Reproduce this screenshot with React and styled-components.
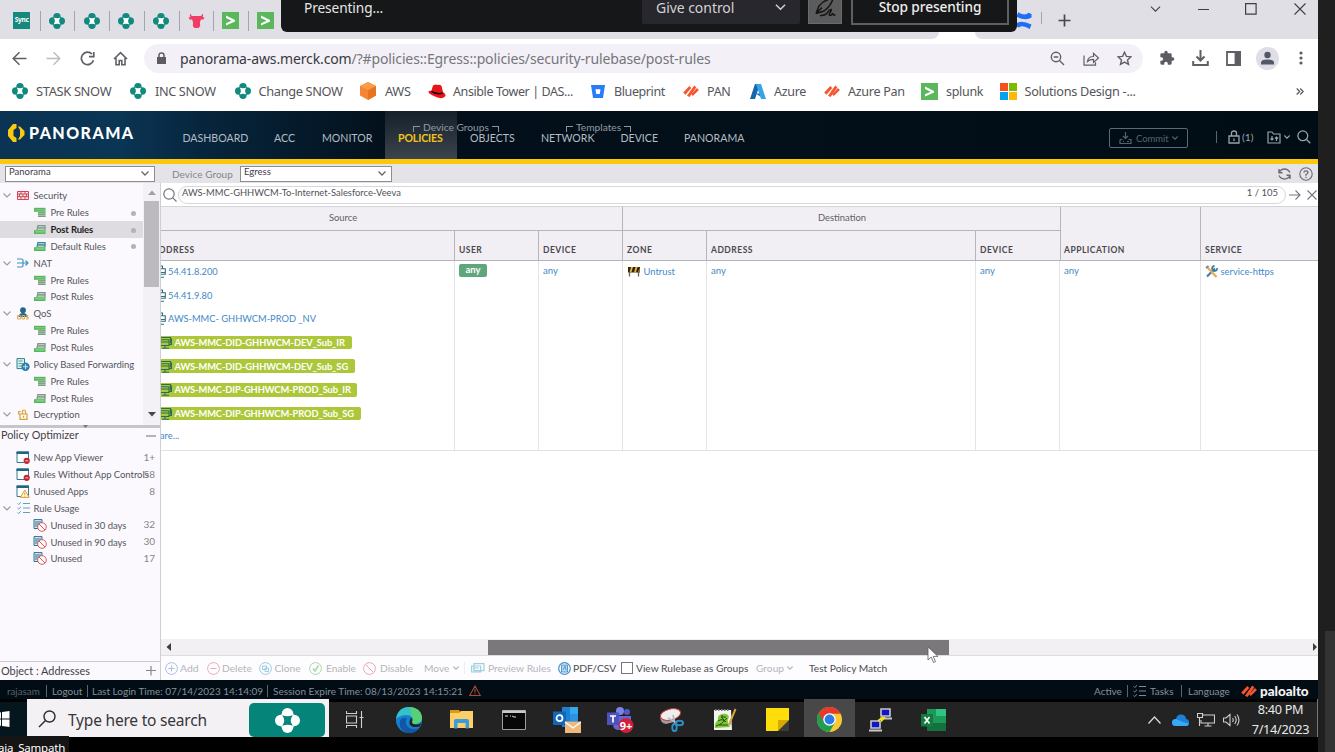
import React from "react";
import styled, { createGlobalStyle } from "styled-components";

const WIN = '"Noto Sans", "Open Sans", sans-serif';
const LATO = 'Lato, "Open Sans", sans-serif';

const GlobalStyle = createGlobalStyle`
  * { box-sizing: border-box; }
  html, body { margin: 0; padding: 0; background: #1f1f1f; }
  body { width: 1335px; height: 752px; overflow: hidden; }
  svg { display: block; flex: none; }
`;

/* ---------- shell ---------- */
const Screen = styled.div`
  display: flex;
  width: 1335px;
  height: 752px;
  overflow: hidden;
  background: #1f1f1f;
  font-family: ${LATO};
`;
const Desktop = styled.div`
  position: relative;
  display: flex;
  flex-direction: column;
  flex: none;
  width: 1318px;
  height: 752px;
  background: #000;
  overflow: hidden;
`;
const Gutter = styled.div`
  flex: 1;
  display: flex;
  align-items: flex-end;
  justify-content: flex-end;
  background: #1f1f1f;
`;
const GutterPanel = styled.div`
  width: 10px;
  height: 121px;
  background: #333;
`;
const Label = styled.span`
  flex: none;
  white-space: pre;
  width: ${(p) => (p.$w ? `${p.$w}px` : "auto")};
  margin-left: ${(p) => p.$ml || 0}px;
  font-size: ${(p) => p.$size || 11}px;
  letter-spacing: ${(p) => p.$ls || 0}px;
  color: ${(p) => p.$c || "inherit"};
  font-weight: ${(p) => p.$b || 400};
`;
const Slot = styled.span`
  flex: none;
  display: flex;
  align-items: center;
  justify-content: center;
  width: ${(p) => p.$w}px;
  margin-left: ${(p) => (p.$push ? "auto" : `${p.$ml || 0}px`)};
  margin-right: ${(p) => p.$mr || 0}px;
`;

/* ---------- browser ---------- */
const TabStrip = styled.div`
  display: flex;
  align-items: flex-start;
  flex: none;
  height: 39px;
  padding: 12px 0 0 4px;
  background: #e0dfe6;
  font-family: ${WIN};
`;
const Tab = styled.div`
  display: flex;
  align-items: center;
  justify-content: center;
  flex: none;
  width: ${(p) => p.$w || 34.8}px;
  height: 17px;
  position: relative;
  &::after {
    content: "";
    position: absolute;
    right: -1px;
    top: -1px;
    width: 1px;
    height: 20px;
    background: ${(p) => (p.$last ? "transparent" : "#a5a4ab")};
  }
`;
const SyncTile = styled.span`
  width: 17px;
  height: 17px;
  line-height: 15px;
  text-align: center;
  background: #15897d;
  color: #fff;
  font-size: 6.5px;
  font-weight: 700;
  letter-spacing: -0.2px;
`;
const ActiveTabFoot = styled.div`
  position: absolute;
  left: 930px;
  top: 32px;
  width: 54px;
  height: 7px;
  display: flex;
  background: #fff;
  &::before, &::after {
    content: "";
    width: 9px;
    background: #e0dfe6;
    border-radius: 0 0 7px 0;
  }
  &::after { margin-left: auto; border-radius: 0 0 0 7px; }
`;
const PresentBar = styled.div`
  position: absolute;
  left: 281px;
  top: 0;
  width: 736px;
  height: 32px;
  display: flex;
  align-items: flex-start;
  padding-left: 23px;
  background: #161719;
  border-radius: 0 0 6px 6px;
  color: #e6e6e6;
  font-family: ${WIN};
  line-height: 16px;
`;
const GiveControl = styled.div`
  display: flex;
  align-items: center;
  width: 158px;
  height: 24px;
  margin-left: auto;
  padding: 0 14px 9px 14px;
  justify-content: space-between;
  background: #28272d;
  color: #d2d2d4;
  border-radius: 0 0 2px 2px;
`;
const PenButton = styled.div`
  display: flex;
  justify-content: center;
  width: 34px;
  height: 23.5px;
  margin-left: 8px;
  background: #5c5c5d;
  border: 1px solid #6b6b6b;
  border-top: 0;
`;
const StopButton = styled.div`
  display: flex;
  justify-content: center;
  width: 158px;
  height: 24.5px;
  margin: 0 8px 0 9px;
  border: 2px solid #5f5f61;
  border-top: 0;
  line-height: 14px;
  color: #eee;
`;
const Toolbar = styled.div`
  display: flex;
  align-items: center;
  flex: none;
  height: 38px;
  padding-left: 12px;
  background: #fff;
  color: #5f6066;
  font-family: ${WIN};
`;
const Omnibox = styled.div`
  display: flex;
  align-items: center;
  width: 999px;
  height: 29px;
  margin-left: 16px;
  padding-left: 13px;
  border-radius: 15px;
  background: #f3f1f7;
`;
const Bookmarks = styled.div`
  display: flex;
  align-items: center;
  flex: none;
  height: 34px;
  padding-bottom: 6px;
  padding-left: 12px;
  background: #fff;
  color: #55555a;
  font-family: ${WIN};
`;
const Bookmark = styled.div`
  display: flex;
  align-items: center;
  flex: none;
  width: ${(p) => p.$w}px;
`;

/* ---------- panorama header ---------- */
const AppHeader = styled.header`
  display: flex;
  align-items: stretch;
  flex: none;
  height: 53px;
  border-bottom: 5px solid #fdc70c;
  background: linear-gradient(90deg, #0b3353 0, #0a3554 120px, #06243b 210px, #03101b 390px, #010d15 100%);
`;
const Brand = styled.div`
  display: flex;
  align-items: center;
  width: 162px;
  height: 43px;
  padding-left: 8px;
`;
const Nav = styled.nav`
  display: flex;
  position: relative;
`;
const NavItem = styled.div`
  width: ${(p) => p.$w}px;
  padding: 19.5px 0 0 ${(p) => p.$pl}px;
  font-size: 10.6px;
  line-height: 15px;
  color: ${(p) => (p.$active ? "#f4c419" : "#b4bcc4")};
  font-weight: ${(p) => (p.$active ? 700 : 400)};
  letter-spacing: ${(p) => (p.$active ? -0.15 : 0)}px;
  white-space: pre;
  background: ${(p) => (p.$active ? "linear-gradient(#15202a, #3c444d)" : "none")};
`;
const GroupCaption = styled.div`
  position: absolute;
  left: ${(p) => p.$x}px;
  top: 10px;
  display: flex;
  align-items: flex-end;
  gap: 3px;
  color: #939ba3;
  font-size: 10.2px;
  line-height: 13px;
  white-space: pre;
  &::before, &::after {
    content: "";
    width: 6px;
    height: 5px;
    margin-bottom: 2px;
    border-top: 1px solid #8b939b;
    border-left: 1px solid #8b939b;
  }
  &::after { border-left: 0; border-right: 1px solid #8b939b; }
`;
const CommitButton = styled.div`
  display: flex;
  align-items: center;
  width: 79px;
  height: 20px;
  margin: 17px 28px 0 auto;
  padding-left: 9px;
  border: 1px solid #5d6a73;
  border-radius: 2px;
  color: #55636d;
`;
const HeaderTools = styled.div`
  display: flex;
  align-items: center;
  width: 102px;
  height: 52px;
  color: #9aa3ab;
`;

/* ---------- context bar ---------- */
const ContextBar = styled.div`
  display: flex;
  align-items: center;
  flex: none;
  height: 19px;
  padding-left: 5px;
  background: #e4e3e7;
  color: #85858b;
`;
const Select = styled.div`
  display: flex;
  align-items: center;
  justify-content: space-between;
  width: ${(p) => p.$w}px;
  height: 16px;
  padding: 0 5px 0 3px;
  background: #fff;
  border: 1px solid #8d8d93;
  color: #44384a;
  & > span { line-height: 12px; padding-bottom: 3px; }
`;

/* ---------- sidebar ---------- */
const Body = styled.div`
  display: flex;
  flex: none;
  height: 497px;
`;
const Sidebar = styled.aside`
  display: flex;
  flex-direction: column;
  flex: none;
  width: 161px;
  background: #fbf9fd;
  border-right: 1px solid #cfced3;
  color: #55555c;
`;
const TreeWrap = styled.div`
  display: flex;
  height: 242px;
`;
const Tree = styled.div`
  width: ${(p) => p.$w}px;
  padding-top: ${(p) => p.$pt}px;
`;
const TreeRow = styled.div`
  display: flex;
  align-items: center;
  height: 16.85px;
  background: ${(p) => (p.$active ? "#dedce0" : "transparent")};
  color: ${(p) => (p.$active ? "#1c1c20" : "inherit")};
`;
const Chevron = styled.span`
  display: flex;
  width: 8px;
  margin-left: 3px;
  visibility: ${(p) => (p.$hide ? "hidden" : "visible")};
`;
const Dot = styled.i`
  width: 5px;
  height: 5px;
  margin: 1px 7px 0 auto;
  border-radius: 50%;
  background: #b4b2b7;
`;
const VScroll = styled.div`
  display: flex;
  flex-direction: column;
  align-items: center;
  width: 17px;
  background: #f3f1f5;
`;
const VThumb = styled.div`
  width: 15px;
  height: 86px;
  margin-bottom: auto;
  background: #bcbabf;
`;
const Splitter = styled.div`
  display: flex;
  justify-content: center;
  height: 3px;
  padding-left: 10px;
  background: #c6c5ca;
`;
const PanelTitle = styled.div`
  display: flex;
  align-items: center;
  justify-content: space-between;
  height: ${(p) => p.$h}px;
  padding: 0 4px 0 1px;
  color: #3f3f45;
  border-top: ${(p) => (p.$line ? "1px solid #c9c8cd" : "0")};
  & > span { padding-bottom: 2px; }
`;
const Count = styled.span`
  margin-left: auto;
  padding-bottom: 2px;
  font-size: 10px;
  color: #85858b;
`;
const Spacer = styled.div`
  flex: 1;
`;

/* ---------- rule grid ---------- */
const Main = styled.main`
  display: flex;
  flex-direction: column;
  width: 1157px;
  background: #fff;
  overflow: hidden;
`;
const FilterRow = styled.div`
  display: flex;
  align-items: center;
  height: 23px;
  padding-left: 2px;
  color: #77777d;
`;
const FilterInput = styled.div`
  display: flex;
  justify-content: space-between;
  width: 1108px;
  height: 18px;
  margin-left: 1px;
  padding: 0 7px 0 3px;
  border: 1px solid #d8d7dc;
  border-radius: 9px;
  color: #515158;
  line-height: 12px;
`;
const GridHead = styled.div`
  display: flex;
  height: 55px;
  background: #f1eff3;
  border-top: 1px solid #d5d4d9;
  border-bottom: 1px solid #b5b4b9;
`;
const HeadGroup = styled.div`
  display: flex;
  flex-direction: column;
  width: ${(p) => p.$w}px;
  border-right: 1px solid #b5b4b9;
`;
const HeadGroupTitle = styled.div`
  height: 24px;
  line-height: 21px;
  padding-left: ${(p) => p.$pl}px;
  border-bottom: 1px solid #b5b4b9;
  font-size: 9.4px;
  color: #606066;
`;
const HeadCells = styled.div`
  display: flex;
  flex: 1;
`;
const HeadCell = styled.div`
  display: flex;
  align-items: flex-end;
  justify-content: flex-start;
  width: ${(p) => p.$w}px;
  flex: none;
  padding: 0 0 3.5px ${(p) => (p.$pl === undefined ? 4 : p.$pl)}px;
  border-right: ${(p) => (p.$end ? 0 : 1)}px solid #b5b4b9;
  overflow: hidden;
  font-size: 8.5px;
  line-height: 13px;
  font-weight: 700;
  letter-spacing: 0.5px;
  color: #4a4950;
  white-space: pre;
  & > span { display: block; margin-left: -2px; }
`;
const GridRow = styled.div`
  display: flex;
  height: 190px;
  border-bottom: 1px solid #e2e1e5;
`;
const Cell = styled.div`
  width: ${(p) => p.$w}px;
  flex: none;
  padding-left: ${(p) => (p.$pl === undefined ? 4 : p.$pl)}px;
  border-right: ${(p) => (p.$end ? 0 : 1)}px solid #e4e3e7;
  color: #4389c8;
  font-size: 9.6px;
  overflow: hidden;
`;
const CellLine = styled.div`
  display: flex;
  align-items: center;
  height: ${(p) => p.$h || 23.6}px;
  padding-bottom: 2px;
  white-space: pre;
`;
const Tag = styled.span`
  display: flex;
  align-items: center;
  width: ${(p) => p.$w}px;
  height: 13.5px;
  background: #acc83a;
  border-radius: 0 2px 2px 0;
  color: #fff;
`;
const AnyBadge = styled.span`
  width: 28px;
  height: 13px;
  line-height: 12px;
  margin-top: -3px;
  border-radius: 2px;
  background: #5fa67c;
  color: #fff;
  text-align: center;
  font-weight: 700;
  font-size: 9.5px;
`;
const HScroll = styled.div`
  display: flex;
  align-items: center;
  height: 17px;
  padding: 0 1px 0 5px;
  background: #f2f0f3;
  border-bottom: 1px solid #dddce0;
`;
const HThumb = styled.div`
  width: 461px;
  height: 15px;
  margin-left: 317px;
  margin-right: auto;
  background: #7b787b;
`;
const ActionBar = styled.div`
  display: flex;
  align-items: center;
  height: 24px;
  padding: 0 0 0 4px;
  background: #fdfcfe;
  color: #55555b;
`;
const Action = styled.div`
  display: flex;
  align-items: center;
  flex: none;
  width: ${(p) => p.$w}px;
  margin-left: ${(p) => p.$ml || 0}px;
  color: ${(p) => (p.$off ? "#b6b5bb" : "#4c4c52")};
`;
const Checkbox = styled.span`
  width: 12px;
  height: 12px;
  margin-right: 3px;
  border: 1px solid #77767c;
  background: #fff;
`;

/* ---------- status + taskbar ---------- */
const StatusBar = styled.footer`
  display: flex;
  align-items: center;
  flex: none;
  height: 19px;
  padding-left: 7px;
  background: #010c14;
  color: #84909a;
  padding-top: 2px;
`;
const Bar = styled.i`
  flex: none;
  width: 1px;
  height: 12px;
  margin-left: ${(p) => p.$ml || 0}px;
  background: ${(p) => p.$c || "#5a666f"};
`;
const Taskbar = styled.div`
  display: flex;
  flex: none;
  height: 38px;
  background: linear-gradient(#000 0 3px, #232323 3px);
  font-family: ${WIN};
`;
const StartButton = styled.div`
  display: flex;
  align-items: center;
  width: 27px;
  padding-top: 2px;
  background: linear-gradient(#000 0 3px, #06161f 3px);
`;
const SearchBox = styled.div`
  display: flex;
  align-items: center;
  width: 302px;
  margin-right: 2px;
  padding: 4px 4px 0 11px;
  background: #f4f1f4;
  color: #37373b;
  & > svg { margin-top: -3px; }
`;
const MerckTile = styled.div`
  display: flex;
  align-items: center;
  justify-content: center;
  width: 76px;
  height: 34px;
  margin-left: auto;
  border-radius: 5px;
  background: #05857a;
`;
const TaskItem = styled.div`
  display: flex;
  align-items: center;
  justify-content: center;
  flex: none;
  width: ${(p) => p.$w || 52.6}px;
  padding: 3px ${(p) => p.$pr || 0}px 0 0;
  background: ${(p) => (p.$active ? "#484848" : "none")};
`;
const Tray = styled.div`
  display: flex;
  align-items: center;
  margin-left: auto;
  padding-top: 3px;
`;
const Clock = styled.div`
  display: flex;
  flex-direction: column;
  align-items: center;
  width: 74px;
  margin-left: 4px;
  padding-top: 1px;
  color: #e9e9e9;
  line-height: 19.5px;
  border-right: 1px solid #777;
`;
const NameTag = styled.div`
  position: absolute;
  left: 0;
  top: 736px;
  width: 69px;
  height: 16px;
  background: #151515;
  color: #fff;
  font: 11.5px/23px ${WIN};
  letter-spacing: -0.2px;
  text-indent: -2px;
  white-space: pre;
  overflow: hidden;
`;
const WindowButtons = styled.div`
  position: absolute;
  top: 3px;
  right: 12px;
  width: 156px;
  height: 12px;
  display: flex;
  align-items: center;
  justify-content: space-between;
  color: #3e3e43;
`;
const Cursor = styled.svg`
  position: absolute;
  left: 927px;
  top: 646px;
`;

/* ---------- icons ---------- */
const Line = ({ w = 12, h = w, vb, s = 1, c = "currentColor", children, ...rest }) => (
  <svg width={w} height={h} viewBox={vb || `0 0 ${w} ${h}`} fill="none" stroke={c} strokeWidth={s} {...rest}>
    {children}
  </svg>
);
const Merck = ({ size = 16, c = "#118a7e", hole = "#fff" }) => (
  <svg width={size} height={size} viewBox="0 0 16 16">
    <g fill={c}>
      <circle cx="8" cy="3.7" r="3.7" />
      <circle cx="8" cy="12.3" r="3.7" />
      <circle cx="3.7" cy="8" r="3.7" />
      <circle cx="12.3" cy="8" r="3.7" />
      <rect x="4" y="4" width="8" height="8" />
    </g>
    <path fill={hole} d="M4.600 4.600Q8 6 11.400 4.600Q8.800 8 11.400 11.400Q8 10 4.600 11.400Q7.200 8 4.600 4.600Z" />
  </svg>
);
const Splunk = () => (
  <svg width="17" height="17" viewBox="0 0 17 17">
    <rect width="17" height="17" fill="#5bb75b" />
    <path d="M4 3.600L13 8v1.400L4 13.600v-2.400l5.600-2.500L4 6z" fill="#fff" />
  </svg>
);
const Cow = () => (
  <svg width="17" height="15" viewBox="0 0 17 15" fill="#ef3d63">
    <path d="M3 .5C2.600 2 3.200 2.800 4.700 3h7.600c1.500-.2 2.100-1 1.700-2.500 1.600 1.300 1.500 2.800.3 3.600l2.200.3-1 2-2.600.2-1 3 .3 3.400L10.500 15h-4l-1.700-2 .3-3.400-1-3-2.600-.2-1-2 2.200-.3C1.500 3.300 1.400 1.800 3 .5z" />
  </svg>
);
const Palo = ({ w = 16, h = 12 }) => (
  <svg width={w} height={h} viewBox="0 0 16 12" fill="#f5552f">
    <path d="M.2 7.400L6.300 1.100l2 2-5.900 6.600z" />
    <path d="M4 10.700L11.200.6l2.200 1.700L6.600 12z" />
    <path d="M8.200 9.200l5.700-6.300 2 2-6.100 6.200z" />
  </svg>
);
const Aws = () => (
  <svg width="16" height="18" viewBox="0 0 16 18">
    <path d="M8 0l8 4v9.500L8 18 0 13.500V4z" fill="#f58534" />
    <path d="M8 8l8-4v9.500L8 18z" fill="#e8731f" />
    <path d="M8 0l8 4-8 4-8-4z" fill="#fb9d46" />
  </svg>
);
const Hat = () => (
  <svg width="18" height="15" viewBox="0 0 18 15">
    <path d="M3 8L5 1.500Q8-.3 9 1q3-1 4.500 1L15 8q3 2 2.500 4Q15 16 7 12.500 0 10 .5 7.500 1 6.500 3 6.800z" fill="#e8161a" />
    <path d="M3.600 6.500Q8 9.800 14.500 8.600l.4 1.500Q8 11.500 3 8z" fill="#1c0000" />
  </svg>
);
const Bitbucket = () => (
  <svg width="14" height="13" viewBox="0 0 14 13">
    <path d="M0 0h14l-2 13H2z" fill="#2a7cf6" />
    <path d="M4.500 4.200h5L8.800 9H5.200z" fill="#fff" />
  </svg>
);
const Azure = () => (
  <svg width="16" height="15" viewBox="0 0 16 15">
    <path d="M5 0h5L5 15H0z" fill="#1765ad" />
    <path d="M6 9.500h6L14 15z" fill="#0d5fb0" />
    <path d="M6 0h5l5 15h-5z" fill="#35a5e8" />
  </svg>
);
const Microsoft = () => (
  <svg width="17" height="17" viewBox="0 0 17 17">
    <path fill="#f4511e" d="M0 0h8v8H0z" />
    <path fill="#7fba00" d="M9 0h8v8H9z" />
    <path fill="#03a4ef" d="M0 9h8v8H0z" />
    <path fill="#fdb90b" d="M9 9h8v8H9z" />
  </svg>
);
const Confluence = () => (
  <svg width="16" height="17" viewBox="0 0 16 17" fill="#1f6ff2">
    <path d="M0 11.500Q5 7.500 15.500 12.500l-1.800 4.500Q6.500 12.500 3 15.500L0 14z" />
    <path d="M15.500 5.500Q10 9.500.5 4.700L2.200.2Q9 4.500 12.500.7L15.500 2z" />
  </svg>
);
const Down = ({ w = 8, s = 1.1, c }) => (
  <Line w={w} h={w / 2 + 1} vb="0 0 8 5" s={s} c={c || "currentColor"}>
    <path d="M.5.5L4 4 7.500.5" />
  </Line>
);
const RuleIcon = ({ kind }) => {
  const side = kind === "default" ? "#3a86b0" : "#8b9290";
  return (
    <svg width="12" height="11" viewBox="0 0 12 11">
      {kind === "pre" ? (
        <>
          <path d="M0 .8h11.500v4H0z" fill="#56b85c" />
          <path d="M4 4.500h7.500V10H4z" fill="#8fce90" />
          <path d="M4 5.300h7.500M4 7.300h7.500M4 9.500h7.500" stroke={side} strokeWidth="1" />
          <path d="M1 2.800h10" stroke="#8ed890" strokeWidth=".8" />
        </>
      ) : (
        <>
          <path d="M3.500 1h8v5.500H2.500z" fill="#a9d3b4" />
          <path d="M3.500 1.500h8M3 3.800h8.500M11 1v5M4 1L3 6" stroke={side} strokeWidth="1.200" fill="none" />
          <path d="M0 6.200h11.500V10H0z" fill="#56b85c" />
          <path d="M1.500 7.900h9" stroke="#a0e09f" strokeWidth=".9" />
        </>
      )}
    </svg>
  );
};
const FirewallIcon = () => (
  <svg width="12" height="9" viewBox="0 0 12 9">
    <path d="M.5.500h11v8H.5z" fill="#fbe6ea" stroke="#cf4558" />
    <path d="M.5 3h11M.5 5.700h11M4 .5V3M8 .5V3M6 3v2.700M2.500 3v2.700M9.500 3v2.700M4 5.700v2.500M8 5.700v2.500" stroke="#cf4558" strokeWidth="1" />
  </svg>
);
const NatIcon = () => (
  <Line w={12} h={10} c="#3f93c4" s={1.2}>
    <path d="M0 1h4.500q1.500 0 1.500 1.500v5Q6 9 4.500 9H0M0 5h11M8.500 2.500L11 5 8.500 7.500" />
  </Line>
);
const QosIcon = () => (
  <svg width="12" height="13" viewBox="0 0 12 13">
    <circle cx="6" cy="3.200" r="2.900" fill="#23688b" />
    <path d="M1.500 10Q2 6 6 6t4.500 4z" fill="#23688b" />
    <path d="M.6 8.600h3v3.400h-3zM5 8.500h2.500V12H5zM11.500 8.600H9.200v1.700h2V12H9" stroke="#dfa64b" fill="none" />
  </svg>
);
const ForwardIcon = () => (
  <svg width="14" height="13" viewBox="0 0 14 13">
    <path d="M1 .6h7.500v10H1z" fill="#dff1ee" stroke="#2c7f96" />
    <path d="M2.500 3h4M2.500 5.500h4M2.500 8h3" stroke="#4fa28a" />
    <circle cx="9.500" cy="8.700" r="4.200" fill="#2d7fae" />
    <path d="M7 8.700h5M9.500 6.200v5" stroke="#bfe0f2" />
  </svg>
);
const UnlockIcon = () => (
  <Line w={10} h={11} c="#d9a032" s={1.2}>
    <path d="M2 10.400h7V5H2zM2 5H.7V2.500h2M5.500 6.800v2M4.500 5V2.500q0-1.500 1.500-1.500T7.500 2.500V5" />
  </Line>
);
const WindowIcon = ({ warn }) => (
  <svg width="14" height="13" viewBox="0 0 14 13">
    <path d="M1 1h11.500v10.500H1z" fill="#fff" stroke="#357a94" />
    <path d="M.5.500H13V3H.5z" fill="#1f6584" />
    {warn ? (
      <path d="M8.800 5l4.400 7.400H4.400zM8.800 7.500v2.500M8.800 10.800v.8" fill="#fdf3d8" stroke="#dca02f" />
    ) : (
      <>
        <circle cx="10.700" cy="9.800" r="3.100" fill="#c22535" />
        <path d="M9.200 9.800h3" stroke="#f5c0c5" />
      </>
    )}
  </svg>
);
const ChecklistIcon = ({ c = "#5ba2c2", check = "#5ba2c2" }) => (
  <svg width="13" height="12" viewBox="0 0 13 12" fill="none">
    <path d="M6 1.500h7M6 6h7M6 10.500h7" stroke={c} strokeWidth="1.200" />
    <path d="M.5 1.500l1.200 1L4 .3M.5 6l1.200 1L4 4.800M.5 10.500l1.200 1L4 9.300" stroke={check} />
  </svg>
);
const UnusedIcon = () => (
  <svg width="14" height="13" viewBox="0 0 14 13">
    <path d="M1 .6h8v8.900H1z" fill="#d8ebf2" stroke="#2b7190" />
    <path d="M2 3h6M2 5h4M2 7h3" stroke="#2b7190" />
    <circle cx="9" cy="8" r="4.300" fill="#fff" stroke="#e0575c" />
    <path d="M6 5l6 6" stroke="#e0575c" />
  </svg>
);
const TREE_ICONS = {
  pre: <RuleIcon kind="pre" />,
  post: <RuleIcon kind="post" />,
  def: <RuleIcon kind="default" />,
  fw: <FirewallIcon />,
  nat: <NatIcon />,
  qos: <QosIcon />,
  pbf: <ForwardIcon />,
  dec: <UnlockIcon />,
  win: <WindowIcon />,
  warn: <WindowIcon warn />,
  list: <ChecklistIcon />,
  unused: <UnusedIcon />,
};
const HostIcon = () => (
  <Line w={5} h={13} c="#33707f" s={1.1}>
    <path d="M0 1h1.500v2.500M0 3.700h4.300v5.500H0M0 7.500h4M0 12.300h3" />
  </Line>
);
const GroupHostIcon = () => (
  <Line w={11} h={13} c="#2b6f55" s={1.1}>
    <path d="M0 1.500h9.500v6M0 3.800h8v5.700H0M9.500 3h1v5.500H8M0 6h8M4 9.500v2.700M1 12.300h7" />
  </Line>
);

const TREE = [
  { t: "Security", i: "fw", root: 1 },
  { t: "Pre Rules", i: "pre", dot: 1 },
  { t: "Post Rules", i: "post", dot: 1, active: 1 },
  { t: "Default Rules", i: "def", dot: 1 },
  { t: "NAT", i: "nat", root: 1 },
  { t: "Pre Rules", i: "pre" },
  { t: "Post Rules", i: "post" },
  { t: "QoS", i: "qos", root: 1 },
  { t: "Pre Rules", i: "pre" },
  { t: "Post Rules", i: "post" },
  { t: "Policy Based Forwarding", i: "pbf", root: 1 },
  { t: "Pre Rules", i: "pre" },
  { t: "Post Rules", i: "post" },
  { t: "Decryption", i: "dec", root: 1 },
];
const OPTIMIZER = [
  { t: "New App Viewer", i: "win", root: 1, leaf: 1, n: "1+" },
  { t: "Rules Without App Controls", i: "win", root: 1, leaf: 1, n: "58" },
  { t: "Unused Apps", i: "warn", root: 1, leaf: 1, n: "8" },
  { t: "Rule Usage", i: "list", root: 1 },
  { t: "Unused in 30 days", i: "unused", n: "32" },
  { t: "Unused in 90 days", i: "unused", n: "30" },
  { t: "Unused", i: "unused", n: "17" },
];
const TreeNode = ({ item }) => (
  <TreeRow $active={item.active}>
    <Chevron $hide={!item.root || item.leaf}>
      <Down w={8} c="#9a999f" />
    </Chevron>
    <Slot $w={14} $ml={item.root ? 5 : 22}>{TREE_ICONS[item.i]}</Slot>
    <Label $ml={item.root ? 3.500 : 3.500} $size={9.500} $b={item.active ? 700 : 400} $ls={item.active ? -0.150 : -0.050}
      $w={item.n ? (item.root ? 100 : 88) : undefined}>
      {item.t}
    </Label>
    {item.dot && <Dot />}
    {item.n && <Count>{item.n}</Count>}
  </TreeRow>
);

const BOOKMARKS = [
  { t: "STASK SNOW", w: 118, s: 12.900, ls: -0.350, g: 8, i: <Merck /> },
  { t: "INC SNOW", w: 105, s: 12.700, ls: -0.350, g: 9, i: <Merck /> },
  { t: "Change SNOW", w: 125, s: 12.800, ls: -0.350, g: 7.500, i: <Merck /> },
  { t: "AWS", w: 68, s: 12.800, ls: -0.300, g: 9, i: <Aws /> },
  { t: "Ansible Tower | DAS...", w: 163, s: 12.500, ls: -0.400, g: 7, i: <Hat /> },
  { t: "Blueprint", w: 92, s: 12.500, ls: -0.400, g: 9, i: <Bitbucket /> },
  { t: "PAN", w: 67, s: 12.500, ls: -0.300, g: 8, i: <Palo /> },
  { t: "Azure", w: 74, s: 12.500, ls: -0.300, g: 8, i: <Azure /> },
  { t: "Azure Pan", w: 97, s: 12.600, ls: -0.300, g: 8, i: <Palo /> },
  { t: "splunk", w: 79, s: 12.500, ls: -0.300, g: 8, i: <Splunk /> },
  { t: "Solutions Design -...", w: 296, s: 12.700, ls: -0.300, g: 7.500, i: <Microsoft /> },
];

const Browser = () => (
  <>
    <TabStrip>
      <Tab $w={35.500}><SyncTile>Sync</SyncTile></Tab>
      {[0, 1, 2, 3].map((k) => <Tab key={k}><Merck /></Tab>)}
      <Tab><Cow /></Tab>
      <Tab><Splunk /></Tab>
      <Tab $last><Splunk /></Tab>
      <Slot $w={16} $ml={733}><Confluence /></Slot>
      <Bar $ml={9} $c="#a5a4ab" />
      <Slot $w={13} $ml={16}>
        <Line w={13} h={17} s={1.700} c="#46464b"><path d="M6.500 2.500v12M.5 8.500h12" /></Line>
      </Slot>
    </TabStrip>
    <ActiveTabFoot />
    <Toolbar>
      <Slot $w={15}><Line w={15} s={1.500}><path d="M14.500 7.500H1.500M7.500 1.200L1.200 7.500l6.300 6.300" /></Line></Slot>
      <Slot $w={15} $ml={19}><Line w={15} s={1.400} c="#bcbcc2"><path d="M.5 7.500h13M7.500 1.200l6.300 6.300-6.300 6.300" /></Line></Slot>
      <Slot $w={15} $ml={19}><Line w={15} s={1.700}><path d="M13.500 9.300A6.200 6.200 0 1 1 12 3M13.800 1v4.700H9" /></Line></Slot>
      <Slot $w={15} $ml={18}><Line w={15} s={1.600}><path d="M1 8l6.500-6.300L14 8M3 7v6.700h3.200V9.500h2.600v4.200H12V7" /></Line></Slot>
      <Omnibox>
        <svg width="9" height="13" viewBox="0 0 9 13"><path d="M0 5h9v7H0z" fill="#5c5d63" /><path d="M2 5V3.200Q2 1 4.500 1T7 3.200V5" fill="none" stroke="#5c5d63" strokeWidth="1.500" /></svg>
        <Label $ml={14} $size={14} $ls={-0.130} $c="#38383d">panorama-aws.merck.com<Label as="span" $size={14} $ls={-0.130} $c="#75757b">/?#policies::Egress::policies/security-rulebase/post-rules</Label></Label>
        <Slot $w={15} $push><Line w={15} s={1.400}><circle cx="6" cy="6" r="4.700" /><path d="M9.500 9.500l4.500 4.500M3.700 6h4.600" /></Line></Slot>
        <Slot $w={17} $ml={18}><Line w={17} h={15} s={1.200}><path d="M1 4.500v9.700h11.500v-3M4.500 10.500q.5-5 6-5V2.300l5 4.700-5 4.500V8.300q-4 0-6 2.200z" /></Line></Slot>
        <Slot $w={15} $ml={17} $mr={11}><Line w={15} s={1.400}><path d="M7.500 1.200l1.900 4.200 4.500.5-3.400 3 1 4.500-4-2.300-4 2.300 1-4.500-3.400-3 4.500-.5z" /></Line></Slot>
      </Omnibox>
      <Slot $w={16} $ml={16}>
        <svg width="16" height="16" viewBox="0 0 24 24" fill="#5c5d63"><path d="M20.500 11H19V7a2 2 0 0 0-2-2h-4V3.500a2.500 2.500 0 0 0-5 0V5H4a2 2 0 0 0-2 2v3.800h1.500a2.700 2.700 0 0 1 0 5.400H2V20a2 2 0 0 0 2 2h3.800v-1.500a2.700 2.700 0 0 1 5.400 0V22H17a2 2 0 0 0 2-2v-4h1.500a2.500 2.500 0 0 0 0-5z" /></svg>
      </Slot>
      <Slot $w={17} $ml={17}><Line w={17} h={16} s={2}><path d="M8.500 0v10M4.500 6.500l4 4 4-4M1.200 11v4h14.600v-4" /></Line></Slot>
      <Slot $w={15} $ml={17}><Line w={15} s={1.800}><path d="M1 1h13v13H1z" /><path d="M9.500 1H14v13H9.500z" fill="#5c5d63" /></Line></Slot>
      <Slot $w={23} $ml={15}>
        <svg width="23" height="23" viewBox="0 0 23 23"><circle cx="11.500" cy="11.500" r="11.500" fill="#dfdde6" /><circle cx="11.500" cy="8" r="3.200" fill="#53576a" /><path d="M5 17.500v-2q0-3 6.500-3t6.500 3v2z" fill="#53576a" /></svg>
      </Slot>
      <Slot $w={4} $ml={20}>
        <svg width="4" height="14" viewBox="0 0 4 14" fill="#5c5d63"><circle cx="2" cy="2" r="1.600" /><circle cx="2" cy="7" r="1.600" /><circle cx="2" cy="12" r="1.600" /></svg>
      </Slot>
    </Toolbar>
    <Bookmarks>
      {BOOKMARKS.map((b, k) => (
        <Bookmark key={k} $w={b.w}>
          {b.i}
          <Label $ml={b.g} $size={b.s} $ls={b.ls}>{b.t}</Label>
        </Bookmark>
      ))}
      <Line w={8} h={7} s={1.200}><path d="M.7.500l3 3-3 3M4.200.500l3 3-3 3" /></Line>
    </Bookmarks>
    <PresentBar>
      <Label $size={13.700} $ls={-0.100}>Presenting...</Label>
      <GiveControl>
        <Label $size={14} $ls={-0.050}>Give control</Label>
        <Down w={11} />
      </GiveControl>
      <PenButton>
        <Line w={24} h={18} s={1.500} c="#161616">
          <path d="M3 13.500L6 6Q10 1 16.500-1L20-1Q17 7 11 11L3 13.500l6-6" />
          <path d="M7 15.500q5 .5 8-3.500 2-3 3-2.500t-1 3q-1.500 3 0 3t2-1.500q1-1 1 .3t2.500.5" />
        </Line>
      </PenButton>
      <StopButton><Label $size={13.700} $ls={-0.100} $b={500}>Stop presenting</Label></StopButton>
    </PresentBar>
  </>
);

const Header = () => (
  <AppHeader>
    <Brand>
      <svg width="17" height="18" viewBox="0 0 17 18" fill="#f8c915">
        <path d="M5 0H8.500v4L5.500 6v6l3 2v4H5L0 12V6z" />
        <path d="M10 2.500h2L16.500 7v4L12 15.500h-2L12 12V6z" />
      </svg>
      <Label $ml={4} $size={16} $b={900} $c="#fff" $ls={1.450}>PANORAMA</Label>
    </Brand>
    <Nav>
      <NavItem $w={92} $pl={20.500}>DASHBOARD</NavItem>
      <NavItem $w={50} $pl={20}>ACC</NavItem>
      <NavItem $w={81} $pl={18}>MONITOR</NavItem>
      <NavItem $w={72} $pl={13} $active>POLICIES</NavItem>
      <NavItem $w={70} $pl={13}>OBJECTS</NavItem>
      <NavItem $w={80} $pl={14}>NETWORK</NavItem>
      <NavItem $w={64} $pl={13.500}>DEVICE</NavItem>
      <NavItem $w={80} $pl={13}>PANORAMA</NavItem>
      <GroupCaption $x={251}>Device Groups</GroupCaption>
      <GroupCaption $x={404}>Templates</GroupCaption>
    </Nav>
    <CommitButton>
      <Line w={13} h={12} s={1.200}><path d="M6.500 0v6M4 4l2.500 2.500L9 4M1 7.500v4h11v-4H9.500M1 7.500h2.500M4 9.500h1M8 9.500h2" /></Line>
      <Label $ml={4} $size={9.400} $w={36}>Commit</Label>
      <Down w={6} s={1.500} />
    </CommitButton>
    <HeaderTools>
      <Bar />
      <Slot $w={12} $ml={10.500}><Line w={12} h={14} s={1.300}><path d="M1 6h10v7H1zM3.500 6V3q0-2 2.500-2t2.500 2v3M6 8.500v2.500" /></Line></Slot>
      <Label $ml={2.500} $size={10.300} $w={25}>(1)</Label>
      <Slot $w={14}><Line w={14} h={13} s={1.200}><path d="M1 12V1h4l1.500 2H13v9zM5 5v4M3.500 7.500L5 9l1.500-1.500M9.500 10V6M8 7.500L9.500 6 11 7.500" /></Line></Slot>
      <Slot $w={6} $ml={3}><Down w={6} s={1.500} /></Slot>
      <Slot $w={14} $ml={7}><Line w={14} s={1.300}><circle cx="5.800" cy="5.800" r="4.900" /><path d="M9.500 9.500l3.800 3.800" /></Line></Slot>
    </HeaderTools>
  </AppHeader>
);

const ADDRESSES = [
  { t: "54.41.8.200" },
  { t: "54.41.9.80" },
  { t: "AWS-MMC- GHHWCM-PROD _NV" },
  { t: "AWS-MMC-DID-GHHWCM-DEV_Sub_IR", w: 191 },
  { t: "AWS-MMC-DID-GHHWCM-DEV_Sub_SG", w: 194 },
  { t: "AWS-MMC-DIP-GHHWCM-PROD_Sub_IR", w: 196 },
  { t: "AWS-MMC-DIP-GHHWCM-PROD_Sub_SG", w: 200 },
];

const Round = ({ c, children }) => (
  <Line w={13} c={c} s={1}><circle cx="6.500" cy="6.500" r="5.900" />{children}</Line>
);

const App = () => (
  <>
    <GlobalStyle />
    <Screen>
      <Desktop>
        <Browser />
        <WindowButtons>
          <Down w={11} s={0.800} />
          <Line w={11} h={11} s={1}><path d="M0 5.500h11" /></Line>
          <Line w={12} h={12} s={1.200}><path d="M.6.600h10.500v10.500H.6z" /></Line>
          <Line w={12} h={12} s={1.100}><path d="M.5.500l11 11M11.500.500l-11 11" /></Line>
        </WindowButtons>
        <Header />
        <ContextBar>
          <Select $w={150}><Label $size={9.500}>Panorama</Label><Down w={8} s={1.300} c="#66666c" /></Select>
          <Label $ml={17} $w={68} $size={10} $ls={0.050}>Device Group</Label>
          <Select $w={152}><Label $size={9.500}>Egress</Label><Down w={8} s={1.300} c="#66666c" /></Select>
          <Slot $w={13} $push>
            <Line w={13} h={12} s={1.400} c="#6a6a70"><path d="M1 4.500Q3 1 6.500 1t5.500 3.500M1 1v3.700h3.500M12 7.500Q10 11 6.500 11T1 7.500M12 11V7.300H8.500" /></Line>
          </Slot>
          <Slot $w={14} $ml={8} $mr={5}>
            <Line w={14} s={1.100} c="#6a6a70"><circle cx="7" cy="7" r="6.200" /><path d="M5 5.500Q5 3.800 7 3.800T9 5.500Q9 6.500 7 7.500v1.200M7 9.700v1.300" strokeWidth="1.300" /></Line>
          </Slot>
        </ContextBar>
        <Body>
          <Sidebar>
            <TreeWrap>
              <Tree $w={143} $pt={4.500}>
                {TREE.map((it, k) => <TreeNode key={k} item={it} />)}
              </Tree>
              <VScroll>
                <svg width="8" height="18" viewBox="0 0 8 18"><path d="M0 12l4-4.500L8 12z" fill="#a09fa5" /></svg>
                <VThumb />
                <svg width="8" height="16" viewBox="0 0 8 16"><path d="M0 3l4 4.500L8 3z" fill="#45454a" /></svg>
              </VScroll>
            </TreeWrap>
            <Splitter><svg width="5" height="3" viewBox="0 0 5 3"><path d="M0 0h5L2.500 3z" fill="#77777d" /></svg></Splitter>
            <PanelTitle $h={15}>
              <Label $size={10.800}>Policy Optimizer</Label>
              <Line w={10} h={2} s={1.200} c="#85858b"><path d="M0 1h10" /></Line>
            </PanelTitle>
            <Tree $w={155} $pt={6.500}>
              {OPTIMIZER.map((it, k) => <TreeNode key={k} item={it} />)}
            </Tree>
            <Spacer />
            <PanelTitle $h={19} $line>
              <Label $size={10.900}>Object : Addresses</Label>
              <Line w={10} s={1.200} c="#85858b"><path d="M0 4.500h10M5 0v9.500" /></Line>
            </PanelTitle>
          </Sidebar>
          <Main>
            <FilterRow>
              <Line w={14} s={1.200}><circle cx="6" cy="6" r="5.200" /><path d="M9.800 9.800l3.700 3.700" /></Line>
              <FilterInput>
                <Label $size={9.350}>AWS-MMC-GHHWCM-To-Internet-Salesforce-Veeva</Label>
                <Label $size={9.500}>1 / 105</Label>
              </FilterInput>
              <Slot $w={12} $ml={3}><Line w={12} h={10} s={1.100}><path d="M0 5h11M6.500.500L11 5 6.500 9.500" /></Line></Slot>
              <Slot $w={10} $ml={6}><Line w={10} h={10} s={1.100}><path d="M.5.500l9 9M9.500.500l-9 9" /></Line></Slot>
            </FilterRow>
            <GridHead>
              <HeadGroup $w={462}>
                <HeadGroupTitle $pl={168}>Source</HeadGroupTitle>
                <HeadCells>
                  <HeadCell $w={294} $pl={0}><span>DDRESS</span></HeadCell>
                  <HeadCell $w={84}>USER</HeadCell>
                  <HeadCell $w={83} $end>DEVICE</HeadCell>
                </HeadCells>
              </HeadGroup>
              <HeadGroup $w={438}>
                <HeadGroupTitle $pl={195}>Destination</HeadGroupTitle>
                <HeadCells>
                  <HeadCell $w={84}>ZONE</HeadCell>
                  <HeadCell $w={269}>ADDRESS</HeadCell>
                  <HeadCell $w={84} $end>DEVICE</HeadCell>
                </HeadCells>
              </HeadGroup>
              <HeadCell $w={140} $pl={3}>APPLICATION</HeadCell>
              <HeadCell $w={117} $end>SERVICE</HeadCell>
            </GridHead>
            <GridRow>
              <Cell $w={294} $pl={0}>
                {ADDRESSES.map((a, k) => (
                  <CellLine key={k}>
                    {a.w ? (
                      <Tag $w={a.w}><GroupHostIcon /><Label $ml={2.500} $size={9.300} $b={700} $ls={-0.080}>{a.t}</Label></Tag>
                    ) : (
                      <><HostIcon /><Label $ml={2} $size={9.300}>{a.t}</Label></>
                    )}
                  </CellLine>
                ))}
                <CellLine $h={20}><Label $size={9.300} $ml={-1}>are...</Label></CellLine>
              </Cell>
              <Cell $w={84}><CellLine><AnyBadge>any</AnyBadge></CellLine></Cell>
              <Cell $w={84}><CellLine $h={20}>any</CellLine></Cell>
              <Cell $w={84}>
                <CellLine>
                  <svg width="14" height="11" viewBox="0 0 14 11">
                    <path d="M1 1h12v5.500H1z" fill="#2d2412" />
                    <path d="M4 1L2.500 6.500h1.800L6 1zM8.500 1L7 6.500h1.800L10.500 1zM12.500 1.500l-1.300 5h1.300z" fill="#e9b23e" />
                    <path d="M2.500 6v4.500M11.500 6v4.500" stroke="#6b6350" strokeWidth="1.300" />
                  </svg>
                  <Label $ml={2.500} $size={9.400}>Untrust</Label>
                </CellLine>
              </Cell>
              <Cell $w={269}><CellLine $h={20}>any</CellLine></Cell>
              <Cell $w={84}><CellLine $h={20}>any</CellLine></Cell>
              <Cell $w={141}><CellLine $h={20}>any</CellLine></Cell>
              <Cell $w={117} $end>
                <CellLine>
                  <svg width="13" height="13" viewBox="0 0 13 13" fill="none">
                    <path d="M2 11.500L10 3.500" stroke="#3f7ca6" strokeWidth="2.200" />
                    <path d="M12 3A2.500 2.500 0 1 1 9.500 1" stroke="#3f7ca6" strokeWidth="1.800" />
                    <path d="M1.500 1.500L11.500 12" stroke="#dfae55" strokeWidth="2.200" />
                    <path d="M1 3l2.500-2" stroke="#8e8a80" strokeWidth="2" />
                  </svg>
                  <Label $ml={2.500} $size={9.400}>service-https</Label>
                </CellLine>
              </Cell>
            </GridRow>
            <Spacer />
            <HScroll>
              <svg width="5" height="8" viewBox="0 0 5 8"><path d="M5 0L.5 4 5 8z" fill="#3c3c40" /></svg>
              <HThumb />
              <svg width="4" height="8" viewBox="0 0 4 8"><path d="M0 0l4 4-4 4z" fill="#3c3c40" /></svg>
            </HScroll>
            <ActionBar>
              <Action $w={42} $off><Round c="#a9bfe3"><path d="M3.500 6.500h6M6.500 3.500v6" /></Round><Label $ml={2} $size={10.400}>Add</Label></Action>
              <Action $w={52} $off><Round c="#eaaab8"><path d="M3.500 6.500h6" /></Round><Label $ml={2} $size={10.200}>Delete</Label></Action>
              <Action $w={50} $off><Round c="#9ccbe3"><path d="M3.500 4h4v3.500h-4zM6 6h3.500v3.500H6z" /></Round><Label $ml={2.500} $size={10.200}>Clone</Label></Action>
              <Action $w={54} $off><Round c="#a9d8a8"><path d="M4 6.500l2 2.500 3.500-5.500" strokeWidth="1.600" /></Round><Label $ml={4} $size={10.200}>Enable</Label></Action>
              <Action $w={61} $off><Round c="#e9a9b2"><path d="M2.500 2.500l8 8" /></Round><Label $ml={4} $size={10.200}>Disable</Label></Action>
              <Action $w={39} $off><Label $size={10.200} $w={29}>Move</Label><Down w={6} s={1.500} /></Action>
              <Bar $ml={1} $c="#eeedf0" />
              <Action $w={87} $off $ml={6}>
                <Line w={14} h={10} c="#9fcfdc" s={1.200}><path d="M3 .6h10v7H3zM.6 3h9v6h-9zM2 5h6" /></Line>
                <Label $ml={3} $size={10.300}>Preview Rules</Label>
              </Action>
              <Action $w={63}>
                <Line w={13} c="#4390c7" s={1.200}><circle cx="6.500" cy="6.500" r="5.800" /><path d="M3.500 3h6v7h-6zM5 8l2-4 1 4" fill="#bfdcf0" strokeWidth="0.900" /></Line>
                <Label $ml={2} $size={10.300}>PDF/CSV</Label>
              </Action>
              <Action $w={135}><Checkbox /><Label $size={10.200}>View Rulebase as Groups</Label></Action>
              <Action $w={53} $off><Label $size={10.200} $w={31}>Group</Label><Down w={6} s={1.500} /></Action>
              <Action $w={90}><Label $size={10.200}>Test Policy Match</Label></Action>
            </ActionBar>
          </Main>
        </Body>
        <StatusBar>
          <Label $size={9.800} $w={39} $c="#56626b">rajasam</Label>
          <Bar />
          <Label $ml={5} $size={10} $w={35}>Logout</Label>
          <Bar />
          <Label $ml={4} $size={10} $w={175}>Last Login Time: 07/14/2023 14:14:09</Label>
          <Bar />
          <Label $ml={5} $size={10} $w={196}>Session Expire Time: 08/13/2023 14:15:21</Label>
          <Line w={12} h={11} c="#a84a3c" s={1.100}><path d="M6 1l5.300 9.500H.7zM6 4v3.500M6 8.500v1" /></Line>
          <Label $ml={613} $size={10} $w={33}>Active</Label>
          <Bar />
          <Slot $w={13} $ml={5}><ChecklistIcon c="#7f8a93" check="#7f8a93" /></Slot>
          <Label $ml={4} $size={10} $w={31}>Tasks</Label>
          <Bar />
          <Label $ml={6} $size={10} $w={53}>Language</Label>
          <Palo w={16} h={12} />
          <Label $ml={3} $size={13.500} $b={900} $c="#f2f2f2" $ls={-0.050}>paloalto</Label>
        </StatusBar>
        <Taskbar>
          <StartButton>
            <svg width="10" height="16" viewBox="0 0 10 16" fill="#fff"><path d="M0 1.500L1 1.300v6.200H0zM2 1.100L9.500 0v7.500H2zM0 8.500h1v6.200H0zM2 8.500h7.500V16L2 14.900z" /></svg>
          </StartButton>
          <SearchBox>
            <Line w={18} h={18} s={1.400} c="#2b2b30"><circle cx="11.500" cy="6.500" r="5.500" /><path d="M7.500 10.500L1 17" /></Line>
            <Label $ml={12} $size={15.500} $ls={-0.200}>Type here to search</Label>
            <MerckTile><Merck size={25} c="#fff" hole="#05857a" /></MerckTile>
          </SearchBox>
          <TaskItem $w={52} $pr={4}>
            <Line w={18} h={17} c="#cfcfcf" s={1.100}><path d="M.5 0v2.500h10V0M.5 5h10v7H.5zM.5 17v-2.500h10V17M15.500 0v17M13.500 6.500h4" /></Line>
          </TaskItem>
          <TaskItem>
            <svg width="26" height="26" viewBox="0 0 26 26">
              <circle cx="13" cy="13" r="13" fill="#1480d3" />
              <path d="M0 12Q2 0 13 0q11 .5 13 10 .5 6-6 7-4 0-4-2 3-6-5-7-7 0-11 4z" fill="#35c1c8" />
              <path d="M14 0q11 1 12 10 .5 6-6 7-4 0-4-2 2-3-.5-5.500z" fill="#58d078" />
              <path d="M11 11q-3 5 1 9 4 3.500 11 1-4.500 6-12 5Q2 23 4 14q1-4 7-3z" fill="#1257a5" />
              <path d="M16 15q0 2.500 4 2.500 3 0 5.500-1.500l-2 3.500q-8 2-10-2.500-.5-3 1.500-6.500 2 1.500 1 4.500z" fill="#232323" />
            </svg>
          </TaskItem>
          <TaskItem>
            <svg width="23" height="19" viewBox="0 0 23 19">
              <path d="M0 0h9l2 3H0z" fill="#d99a15" />
              <path d="M0 3h9l2-2h12v17H0z" fill="#fcd066" />
              <path d="M4 18.500V11q0-2 2-2h11q2 0 2 2v7.500h-3.500V13h-8v5.500z" fill="#3a9be0" />
            </svg>
          </TaskItem>
          <TaskItem>
            <svg width="24" height="20" viewBox="0 0 24 20">
              <path d="M.5.500h23v19H.5z" fill="#070707" stroke="#9d9d9d" />
              <path d="M.5.500h23v2.500H.5z" fill="#c9c9c9" />
              <path d="M3 6h3M8 6h1M10 6l2 1h2" stroke="#ddd" />
            </svg>
          </TaskItem>
          <TaskItem>
            <svg width="28" height="26" viewBox="0 0 28 26">
              <path d="M9 0h16v20H9z" fill="#1a82d6" />
              <path d="M17 0h8v7h-8z" fill="#35a8ee" /><path d="M17 7h8v7h-8z" fill="#2c93e3" />
              <path d="M0 4.500h13V18H0z" fill="#0f66bb" />
              <circle cx="6.500" cy="11.200" r="3" fill="none" stroke="#fff" strokeWidth="1.700" />
              <path d="M12 14.500h16V26H12z" fill="#efb97b" /><path d="M12 15l8 6 8-6" fill="none" stroke="#fff" strokeWidth="1.300" />
            </svg>
          </TaskItem>
          <TaskItem>
            <svg width="28" height="26" viewBox="0 0 28 26">
              <circle cx="14" cy="4" r="4" fill="#7b83eb" /><circle cx="21" cy="5" r="3" fill="#5059c9" />
              <path d="M8 9h12v8q-1 6-7 6t-6-6zM20 9h5v6q-1 4-5 4z" fill="#6169d0" />
              <path d="M1 5.500h12v12.500H1z" fill="#4b53bc" />
              <path d="M4 9h6M7 9v6.500" stroke="#fff" strokeWidth="1.700" />
              <circle cx="20" cy="18.500" r="7.500" fill="#cf1f3c" />
              <text x="20" y="22.500" textAnchor="middle" fontSize="11" fontWeight="700" fill="#fff">9+</text>
            </svg>
          </TaskItem>
          <TaskItem>
            <svg width="24" height="24" viewBox="0 0 24 24" fill="none">
              <path d="M0 8q0 7 6 8l8-2-4-5z" fill="#9a9a9f" />
              <ellipse cx="10.500" cy="6.500" rx="10.300" ry="5.500" fill="#eee" stroke="#c93b3b" transform="rotate(-14 10.500 6.500)" />
              <path d="M8 10l9 5M13 7l2 9" stroke="#b9b9be" strokeWidth="1.800" />
              <ellipse cx="19.500" cy="15" rx="3.500" ry="2.200" stroke="#2d8fc4" strokeWidth="2" />
              <ellipse cx="14.500" cy="19.500" rx="2.200" ry="3.600" stroke="#2d8fc4" strokeWidth="2" />
            </svg>
          </TaskItem>
          <TaskItem>
            <svg width="24" height="23" viewBox="0 0 24 23">
              <path d="M1 2h17l1 20H1z" fill="#f3f5ee" />
              <path d="M2 2h15" stroke="#777" strokeDasharray="1.500 1.500" strokeWidth="2" />
              <path d="M2 20q-1-5 3-8-1-5 4-6 6-1 7 3-2 3-1 5l2 5z" fill="#7ec93a" />
              <path d="M3 18q6-1 11-8M9 7q-1 3 2 5M5 13q4-3 8 1M8 9h5M6 17h9" stroke="#2c4a12" fill="none" />
              <path d="M22.500 1l-5 12-1 4" stroke="#d6a53d" strokeWidth="2" fill="none" />
            </svg>
          </TaskItem>
          <TaskItem>
            <svg width="23" height="23" viewBox="0 0 23 23"><path d="M0 0h23v12L12 23H0z" fill="#fddd0a" /><path d="M12 12h11v11H12z" fill="#3b3b3b" /><path d="M12 23V12h11z" fill="#d9a900" /></svg>
          </TaskItem>
          <TaskItem $active $w={51}>
            <svg width="25" height="25" viewBox="0 0 24 24">
              <circle cx="12" cy="12" r="12" fill="#fcc934" />
              <path d="M12 12L1.600 6A12 12 0 0 0 12 24l5.200-9z" fill="#1e9e4f" />
              <path d="M12 6.500h10.700A12 12 0 0 0 1.600 6l5.500 9z" fill="#e33b2e" />
              <circle cx="12" cy="12" r="6" fill="#fff" /><circle cx="12" cy="12" r="4.700" fill="#2a7de9" />
            </svg>
          </TaskItem>
          <TaskItem>
            <svg width="24" height="24" viewBox="0 0 24 24">
              <path d="M12 1h9v7h-9zM2 13h9v7H2z" fill="#1414c8" stroke="#c9c9c9" strokeWidth="1.600" />
              <path d="M11 9.500h12v2H11zM0 21.500h13v2H0z" fill="#c9c9c9" />
              <path d="M9 13l4-3v2l3-3" stroke="#f4e21a" strokeWidth="2" fill="none" />
            </svg>
          </TaskItem>
          <TaskItem>
            <svg width="25" height="22" viewBox="0 0 25 22">
              <path d="M6 0h19v22H6z" fill="#1d9a58" /><path d="M15 0h10v7H15z" fill="#31c481" /><path d="M15 14h10v8H6v-8z" fill="#14713e" />
              <path d="M0 5h12v12.500H0z" fill="#137a41" /><path d="M3.500 8l5 6.500M8.500 8l-5 6.500" stroke="#fff" strokeWidth="1.700" />
            </svg>
          </TaskItem>
          <Tray>
            <Slot $w={13}>
              <Line w={13} h={8} c="#ddd" s={1.200}><path d="M.5 7.500l6-6.500 6 6.500" /></Line>
            </Slot>
            <Slot $w={17} $ml={11}>
              <svg width="17" height="12" viewBox="0 0 17 12"><path d="M4 12Q0 12 0 8.500T4 5q1-5 5.500-4.500T14 5q3 0 3 3.500T14 12z" fill="#1f7fd4" /><path d="M0 8.500Q0 5 4 5l7 3 6 1.500Q16.500 12 14 12H4Q0 12 0 8.500z" fill="#35aaf5" /></svg>
            </Slot>
            <Slot $w={18} $ml={8}>
              <Line w={18} h={14} c="#d0d0d0" s={1.100}><path d="M5 2h12.500v8H4V7M.5.500h5v4h-5zM2.500 4.500V13M11 10v3M7.500 13h7" /></Line>
            </Slot>
            <Slot $w={17} $ml={8}>
              <Line w={17} h={14} c="#d0d0d0" s={1.100}><path d="M.5 5h2.500L7 1.500v11L3 9H.5zM9.500 5q1.500 2 0 4M11.700 3q3 4 0 8M14 1.500q4 5.500 0 11" /></Line>
            </Slot>
          </Tray>
          <Clock>
            <Label $size={12.700} $ls={-0.300}>8:40 PM</Label>
            <Label $size={12.700} $ls={-0.300}>7/14/2023</Label>
          </Clock>
        </Taskbar>
        <NameTag>aja_Sampath</NameTag>
        <Cursor width="12" height="18" viewBox="0 0 12 18">
          <path d="M1 1v13l3.200-3 2.300 5.500 2-.9-2.300-5.200H11z" fill="#fff" stroke="#5a5a5a" strokeWidth="0.800" />
        </Cursor>
      </Desktop>
      <Gutter><GutterPanel /></Gutter>
    </Screen>
  </>
);

export default App;
